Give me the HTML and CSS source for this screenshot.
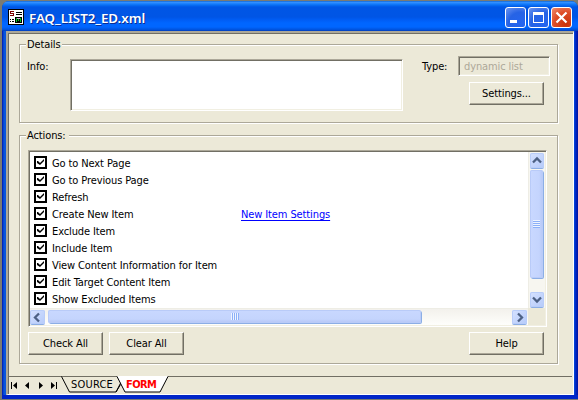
FILE: index.html
```
<!DOCTYPE html>
<html lang="en">
<head>
<meta charset="utf-8">
<title>FAQ_LIST2_ED.xml</title>
<link rel="stylesheet" href="styles.css">
</head>
<body>
<div class="window">
  <header class="titlebar">
    <svg class="app-icon" width="16" height="16" shape-rendering="crispEdges">
      <path fill="#000" d="M0 0h16v16H0z"/><path fill="#fff" d="M1 1h14v14H1z"/>
      <path fill="#800000" d="M2 2h4v1H2zM2 3h1v2H2zM2 4h4v1H2zM5 5h1v1H5zM2 6h4v1H2z"/>
      <path fill="#000" d="M8 3h6v1H8zM8 5h6v1H8zM2 10h1v1H2zM4 10h2v1H4zM2 12h1v1H2zM4 12h2v1H4zM7 8h7v6H7z"/>
      <path fill="#00d020" d="M8 9h1v4H8zM12 9h1v4h-1zM10 10h1v2h-1z"/><path fill="#e6a0e0" d="M9 9h3v1H9z"/>
    </svg>
    <h1 class="title">FAQ_LIST2_ED.xml</h1>
    <div class="controls">
      <button class="control" aria-label="Minimize"><svg width="19" height="19"><path fill="#fff" d="M4 12h7v3H4z"/></svg></button>
      <button class="control" aria-label="Maximize"><svg width="19" height="19"><path fill="#fff" fill-rule="evenodd" d="M4 4h11v11H4zM5 7v7h9V7z"/></svg></button>
      <button class="control close" aria-label="Close"><svg width="19" height="19"><path stroke="#fff" stroke-width="2.2" d="M4.500 4.500l10 10M14.500 4.500l-10 10"/></svg></button>
    </div>
  </header>
  <main class="client">
    <section class="group details">
      <h2 class="legend">Details</h2>
      <label class="label info-label">Info:</label>
      <div class="info-box"></div>
      <div class="type-area">
        <div class="type-row"><label class="label type-label">Type:</label><div class="type-value">dynamic list</div></div>
        <button class="button">Settings...</button>
      </div>
    </section>
    <section class="group actions">
      <h2 class="legend wide">Actions:</h2>
      <div class="listbox">
        <ul class="items">
          <li><i class="check"></i><span>Go to Next Page</span></li>
          <li><i class="check"></i><span>Go to Previous Page</span></li>
          <li><i class="check"></i><span>Refresh</span></li>
          <li><i class="check"></i><span class="name">Create New Item</span><a class="link">New Item Settings</a></li>
          <li><i class="check"></i><span>Exclude Item</span></li>
          <li><i class="check"></i><span>Include Item</span></li>
          <li><i class="check"></i><span>View Content Information for Item</span></li>
          <li><i class="check"></i><span>Edit Target Content Item</span></li>
          <li><i class="check"></i><span>Show Excluded Items</span></li>
        </ul>
        <div class="vscroll">
          <div class="arrow"><svg width="14" height="15"><path class="chevron" d="M3 9.500l4-4 4 4"/></svg></div>
          <div class="vthumb"><i class="vgrip"></i></div>
          <div class="arrow down"><svg width="14" height="15"><path class="chevron" d="M3 5.500l4 4 4-4"/></svg></div>
        </div>
        <div class="hscroll">
          <div class="arrow"><svg width="15" height="15"><path class="chevron" d="M9 3.500l-4 4 4 4"/></svg></div>
          <div class="hthumb"><i class="hgrip"></i></div>
          <div class="arrow right"><svg width="15" height="15"><path class="chevron" d="M6 3.500l4 4-4 4"/></svg></div>
        </div>
      </div>
      <div class="buttons">
        <button class="button">Check All</button>
        <button class="button">Clear All</button>
        <button class="button help">Help</button>
      </div>
    </section>
    <nav class="tabs">
      <svg class="tab-shapes" width="564" height="18">
        <path stroke="#716f64" d="M0 .5h564"/>
        <path fill="#ece9d8" d="M53 1l8 15h47l8-15z"/>
        <path fill="none" stroke="#000" d="M53.500 .5l8 15.500h46.500l8-15.500"/>
        <path fill="#fff" d="M109 0l8 16h35l8-16z"/>
        <path fill="none" stroke="#000" d="M109 .5l8 15.500h35l8-15.500"/>
        <path stroke="#000" d="M112.500 8.500l-4.500 7.500"/>
        <path fill="#000" d="M3 6h1v7H3zM9 6v7L5 9.500zM21 6v7l-4-3.500zM31 6v7l4-3.500zM43 6v7l4-3.500zM48 6h1v7h-1z"/>
      </svg>
      <span class="tab source">SOURCE</span><span class="tab form">FORM</span>
    </nav>
  </main>
</div>
</body>
</html>
```

FILE: styles.css
```
* { box-sizing: border-box; }
body {
  margin: 0; width: 578px; height: 400px; overflow: hidden;
  padding: 1px 0 1px 2px; background: #7b7b73;
  font: 11px/13px "DejaVu Sans Condensed", "DejaVu Sans", sans-serif;
  font-stretch: condensed; letter-spacing: -.11px; color: #000;
}
h1, h2, ul { margin: 0; padding: 0; list-style: none; }
svg { display: block; }
button { font: inherit; letter-spacing: inherit; color: inherit; padding: 0; margin: 0; }
.window {
  height: 398px; padding: 0 3px 4px 4px; border-radius: 7px 7px 0 0;
  background: linear-gradient(90deg, #0016b0 0, #0855dd 2px, #0855dd 4px, #0855dd 572px, #0030d0 573px, #0011a0 576px);
  box-shadow: inset 0 -4px #0026c8;
}
.titlebar {
  height: 30px; margin: 0 -3px 0 -4px; padding: 0 6px 0 6px;
  display: flex; align-items: center; border-radius: 7px 7px 0 0;
  background: linear-gradient(#0058c8 0, #3d95ff 1px, #2588ff 2px, #0870f5 4px, #0056e5 6px, #0055e5 16px, #005df5 19px, #0066ff 22px, #0066ff 26px, #0050d8 29px, #0038b8 30px);
}
.app-icon { margin-top: 2px; }
.title {
  margin: 3px 0 0 5px; font: 600 13.300px/18px "Noto Sans", sans-serif;
  letter-spacing: 0; color: #fff; text-shadow: 1px 1px #0b2c91;
}
.controls { display: flex; gap: 2px; margin: 3px 0 0 auto; }
.control {
  width: 21px; height: 21px; border: 1px solid #fff; border-radius: 3px;
  background: radial-gradient(circle at 75% 85%, #2465f0, #2663e5 55%, #6e96f0 100%);
}
.control.close { background: radial-gradient(circle at 75% 85%, #c93208, #dd4c26 55%, #f08d70 100%); }
.client {
  height: 364px; padding: 11px 15px 0 11px; margin-right: 1px; background: #ece9d8;
  border: 2px solid; border-color: #aca899 #fff #fff #aca899; border-right-width: 1px; border-bottom-width: 1px;
  box-shadow: inset 1px 1px #716f64;
}
.group { position: relative; border: 1px solid #aca899; box-shadow: 1px 1px #fff, inset 1px 1px #fff; }
.legend {
  position: absolute; left: 6px; top: -7px; width: 36px; padding-left: 1px;
  font: inherit; background: #ece9d8;
}
.legend.wide { width: 43px; }
.details { height: 79px; display: flex; padding: 14px 7px 0 7px; }
.info-label { width: 43px; padding-top: 1px; flex: none; }
.info-box, .type-value, .listbox {
  border: 1px solid; border-color: #aca899 #fff #fff #aca899;
  box-shadow: inset 1px 1px #716f64, inset -1px -1px #f1efe2;
}
.info-box { width: 333px; height: 52px; background: #fff; flex: none; }
.type-area { margin: -3px 0 0 19px; width: 128px; flex: none; }
.type-row { display: flex; }
.type-label { width: 36px; padding-top: 4px; }
.type-value { width: 92px; height: 20px; padding: 3px 5px; color: #aca899; }
.button {
  width: 75px; height: 23px; background: #ece9d8; line-height: 19px;
  border: 1px solid; border-color: #fff #716f64 #716f64 #fff; box-shadow: inset -1px -1px #aca899;
}
.type-area .button { display: block; margin: 6px 0 0 47px; }
.actions { height: 229px; margin-top: 12px; padding: 14px 8px 0; }
.listbox {
  width: 519px; height: 177px; padding: 1px; background: #fff;
  display: grid; grid-template: 156px 17px / 498px 17px; margin-bottom: 5px;
}
.items { padding: 2px 0 0 4px; }
.items li { height: 17px; display: flex; align-items: center; }
.items span, .items a { padding-top: 2px; }
.check {
  width: 13px; height: 13px; margin-right: 5px; border: 2px solid #000; background: #fff;
  display: grid; place-items: center;
}
.check::before {
  content: ""; width: 7px; height: 7px; background: #000;
  clip-path: polygon(0 2px, 1px 2px, 3px 4px, 7px 0, 7px 2px, 3px 6px, 0 4px);
}
.name { width: 189px; }
.link { color: #00f; text-decoration: underline; text-underline-offset: 2px; text-decoration-skip-ink: none; }
.vscroll { background: #f7f6f0; padding: 1px; display: flex; flex-direction: column; border-left: 1px solid #eeede5; }
.vscroll .arrow { width: 14px; }
.hscroll { background: linear-gradient(#f3f1ec, #fefefb); display: flex; border-top: 1px solid #eeede5; padding-top: 1px; }
.listbox::after { content: ""; background: #ece9d8; }
.arrow {
  width: 15px; height: 15px; border-radius: 2px; flex: none;
  background: linear-gradient(135deg, #d6e2ff, #b5cafa); box-shadow: inset 0 0 0 1px #b9cdf9, 0 1px #8caee5;
}
.hscroll .arrow { height: 14px; }
.chevron { fill: none; stroke: #4d6185; stroke-width: 2.300; }
.vthumb {
  width: 13px; height: 108px; margin-top: 2px; border-radius: 2px; display: grid; place-items: center;
  background: linear-gradient(90deg, #c9d8ff, #c4d4fd 70%, #b5c6f5); box-shadow: inset 0 0 0 1px #b9cbf8, 1px 1px #8caee5;
}
.vgrip { width: 7px; height: 8px; background: repeating-linear-gradient(#eef4ff 0 1px, #8cb0f8 1px 2px); }
.down { margin-top: auto; }
.hthumb {
  width: 373px; height: 13px; margin-left: 3px; border-radius: 2px; display: grid; place-items: center;
  background: linear-gradient(#c9d8ff, #c4d4fd 70%, #b5c6f5); box-shadow: inset 0 0 0 1px #b9cbf8, 1px 1px #8caee5;
}
.hgrip { width: 8px; height: 7px; background: repeating-linear-gradient(90deg, #eef4ff 0 1px, #8cb0f8 1px 2px); }
.right { margin-left: auto; margin-right: 1px; }
.buttons { display: flex; gap: 6px; }
.help { margin-left: auto; margin-right: 5px; }
.tabs { position: relative; height: 18px; margin: 12px -15px 0 -11px; display: flex; }
.tab-shapes { position: absolute; left: 0; top: 0; }
.tab { position: relative; padding-top: 2px; }
.source { margin-left: 63px; width: 55px; letter-spacing: .2px; }
.form { color: #f00; font-weight: bold; letter-spacing: -.6px; }
```
